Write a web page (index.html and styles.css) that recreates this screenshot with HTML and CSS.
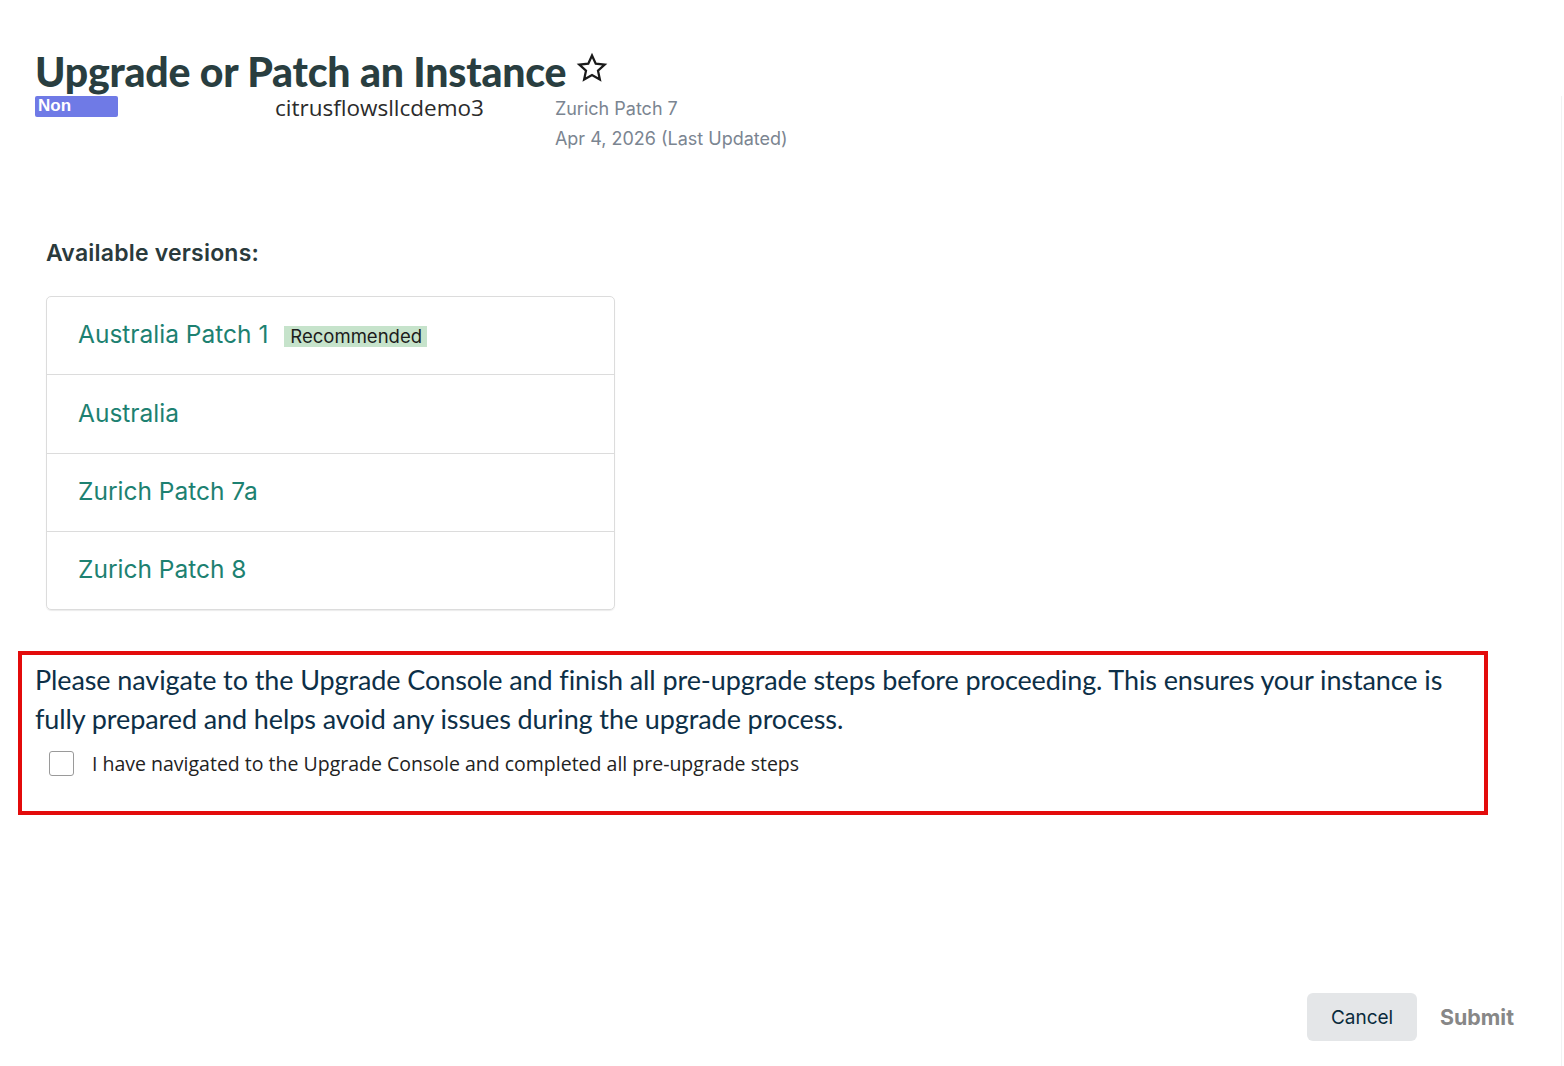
FILE: index.html
```html
<!DOCTYPE html>
<html>
<head>
<meta charset="utf-8">
<link rel="stylesheet" href="styles.css">
</head>
<body>
<div class="page">
  <header class="header">
    <div class="title-row">
      <h1 class="title">Upgrade or Patch an Instance</h1>
      <svg class="star" width="32" height="32" viewBox="0 0 24 24"><path d="M12 2.6l2.8 6.2 6.7.7-5 4.5 1.4 6.6L12 17.2l-5.9 3.4 1.4-6.6-5-4.5 6.7-.7z" fill="none" stroke="#1a1a1a" stroke-width="1.7" stroke-linejoin="miter"/></svg>
    </div>
    <div class="meta-row">
      <span class="badge-non">Non</span>
      <span class="instance">citrusflowsllcdemo3</span>
      <div class="version-info">
        <div class="cur">Zurich Patch 7</div>
        <div class="upd">Apr 4, 2026 (Last Updated)</div>
      </div>
    </div>
  </header>

  <section class="versions">
    <h2 class="vh">Available versions:</h2>
    <ul class="vlist">
      <li class="vitem"><span class="vname">Australia Patch 1</span><span class="rec">Recommended</span></li>
      <li class="vitem"><span class="vname">Australia</span></li>
      <li class="vitem"><span class="vname">Zurich Patch 7a</span></li>
      <li class="vitem"><span class="vname">Zurich Patch 8</span></li>
    </ul>
  </section>

  <section class="notice">
    <p class="notice-text">Please navigate to the Upgrade Console and finish all pre-upgrade steps before proceeding. This ensures your instance is fully prepared and helps avoid any issues during the upgrade process.</p>
    <label class="check">
      <span class="box"></span>
      <span class="check-label">I have navigated to the Upgrade Console and completed all pre-upgrade steps</span>
    </label>
  </section>

  <footer class="actions">
    <button class="btn-cancel">Cancel</button>
    <button class="btn-submit">Submit</button>
  </footer>
</div>
<div class="edge"></div>
</body>
</html>
```

FILE: styles.css
```css
* { box-sizing: border-box; }
html, body { margin: 0; padding: 0; background: #fff; }
body { width: 1564px; height: 1066px; overflow: hidden; position: relative; font-family: "Lato", "Liberation Sans", sans-serif; }
.page { padding: 0 0 0 18px; width: 1564px; }
.header { padding: 52px 0 0 17px; }
.title-row { display: flex; align-items: flex-start; gap: 10px; }
.title { margin: 0; font-family: "Lato", sans-serif; font-weight: 900; font-size: 41px; line-height: 40px; color: #293e40; letter-spacing: -0.2px; }
.star { margin-top: 0px; }
.meta-row { display: flex; align-items: flex-start; margin-top: 4px; }
.badge-non { display: inline-block; width: 83px; height: 21px; background: #6f7ae6; color: #fff; font-family: "Liberation Sans", Arial, sans-serif; font-weight: bold; font-size: 17px; line-height: 20px; padding-left: 3px; border-radius: 2px; }
.instance { margin-left: 157px; font-family: "Open Sans", sans-serif; font-size: 22.5px; line-height: 24px; color: #2b2b2b; }
.version-info { margin-left: 71px; font-family: "Inter", sans-serif; font-size: 18px; color: #7b8591; }
.cur { line-height: 24px; margin-top: 1px; }
.upd { line-height: 24px; margin-top: 6px; }
.versions { padding: 88px 0 0 28px; }
.vh { margin: 0; font-family: "Inter", sans-serif; font-weight: 600; font-size: 23px; line-height: 28px; color: #2a3a3c; letter-spacing: 0.2px; }
.vlist { list-style: none; margin: 29px 0 0; padding: 0; width: 569px; border: 1px solid #dcdcdc; border-radius: 5px; box-shadow: 0 1px 1px rgba(0,0,0,0.08); }
.vitem { height: 78px; display: flex; align-items: center; padding: 0 0 3px 31px; border-top: 1px solid #dcdcdc; }
.vitem:first-child { border-top: none; height: 77px; }
.vitem:nth-child(2) { height: 79px; }
.vname { font-family: "Inter", sans-serif; font-size: 24.5px; color: #1d8171; }
.rec { margin-left: 16px; margin-top: 4px; background: #c6e3cb; font-family: "Inter", sans-serif; font-size: 18.5px; line-height: 21px; padding: 0 5px 0 6px; color: #1c1c1c; }
.notice { margin-top: 41px; width: 1470px; height: 164px; border: 4px solid #e30b0b; padding: 5px 0 0 13px; }
.notice-text { margin: 0; font-family: "Lato", sans-serif; font-size: 27px; line-height: 39px; color: #0d2f47; letter-spacing: -0.1px; }
.check { display: flex; align-items: center; margin-top: 12px; padding-left: 14px; }
.box { width: 25px; height: 25px; border: 1px solid #9a9a9a; border-radius: 3px; background: #fff; }
.check-label { margin-left: 18px; font-family: "Open Sans", sans-serif; font-size: 19.5px; color: #222; }
.actions { display: flex; justify-content: flex-end; align-items: center; margin-top: 178px; padding-right: 50px; gap: 23px; }
.btn-cancel { width: 110px; height: 48px; border: none; border-radius: 6px; background: #e4e6e8; font-family: "Inter", sans-serif; font-size: 19px; color: #0a2b3c; }
.btn-submit { border: none; background: none; padding: 0; font-family: "Inter", sans-serif; font-weight: 700; font-size: 21.4px; color: #878787; }
.edge { position: absolute; left: 1561px; top: 96px; width: 1px; height: 970px; background: #f2f2f2; }
```
